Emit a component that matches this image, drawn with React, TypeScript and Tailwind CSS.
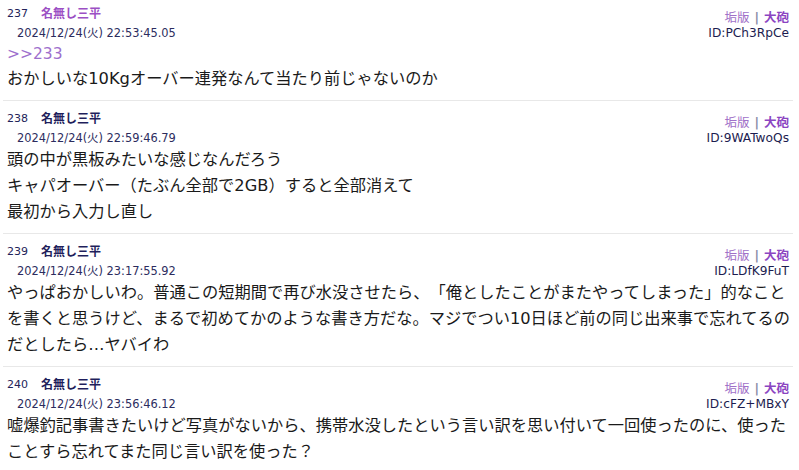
const posts = [
  {
    no: 237,
    visited: true,
    date: '2024/12/24(火) 22:53:45.05',
    id: 'PCh3RpCe',
    anchor: '>>233',
    lines: ['おかしいな10Kgオーバー連発なんて当たり前じゃないのか'],
  },
  {
    no: 238,
    visited: false,
    date: '2024/12/24(火) 22:59:46.79',
    id: '9WATwoQs',
    lines: ['頭の中が黒板みたいな感じなんだろう', 'キャパオーバー（たぶん全部で2GB）すると全部消えて', '最初から入力し直し'],
  },
  {
    no: 239,
    visited: false,
    date: '2024/12/24(火) 23:17:55.92',
    id: 'LDfK9FuT',
    lines: [
      'やっぱおかしいわ。普通この短期間で再び水没させたら、「俺としたことがまたやってしまった」的なことを書くと思うけど、まるで初めてかのような書き方だな。マジでつい10日ほど前の同じ出来事で忘れてるのだとしたら…ヤバイわ',
    ],
  },
  {
    no: 240,
    visited: false,
    date: '2024/12/24(火) 23:56:46.12',
    id: 'cFZ+MBxY',
    lines: [
      '嘘爆釣記事書きたいけど写真がないから、携帯水没したという言い訳を思い付いて一回使ったのに、使ったことすら忘れてまた同じ言い訳を使った？',
    ],
  },
];

type Post = (typeof posts)[number] & { anchor?: string };

function PostItem({ post }: { post: Post }) {
  return (
    <div className="ml-[3px] mr-[6px] border-b border-[#e8e8e8] pl-[4px] pr-[4px] pt-[10px] pb-[8px]">
      <div className="flex items-end justify-between">
        <div>
          <div className="flex h-[16px] items-center leading-[16px]">
            <span className="w-[34px] text-[11px] text-[#23235a]">{post.no}</span>
            <span
              className={`text-[12px] font-bold ${post.visited ? 'text-[#9b4fc4]' : 'text-[#1f1f5c]'}`}
            >
              名無し三平
            </span>
          </div>
          <div className="mt-[3px] h-[16px] pl-[10px] text-[11.4px] leading-[16px] text-[#2c2c5e]">
            {post.date}
          </div>
        </div>
        <div className="flex flex-col items-end">
          <div className="h-[15px] text-[12.5px] leading-[15px]">
            <span className="text-[#a070c8]">垢版</span>
            <span className="mx-[5px] font-bold text-[#8a8aa8]">|</span>
            <span className="font-bold text-[#8b45c2]">大砲</span>
          </div>
          <div className="h-[16px] text-[12.2px] leading-[16px] text-[#1c1c50]">ID:{post.id}</div>
        </div>
      </div>
      <div className="-mr-[6px] mt-[1px] text-[16.25px] leading-[26px] text-[#1a1a1a] [text-spacing-trim:space-all]">
        {post.anchor && <div className="leading-[24px] text-[15.5px] text-[#9d6fcd]">{post.anchor}</div>}
        {post.lines.map((line) => (
          <div key={line}>{line}</div>
        ))}
      </div>
    </div>
  );
}

export default function App() {
  return (
    <div
      className="h-[470px] w-[799px] overflow-hidden bg-white"
      style={{ fontFamily: '"DejaVu Sans", "Noto Sans CJK JP", sans-serif' }}
    >
      <div className="-mt-[4px]">
        {posts.map((post) => (
          <PostItem key={post.no} post={post} />
        ))}
      </div>
    </div>
  );
}
